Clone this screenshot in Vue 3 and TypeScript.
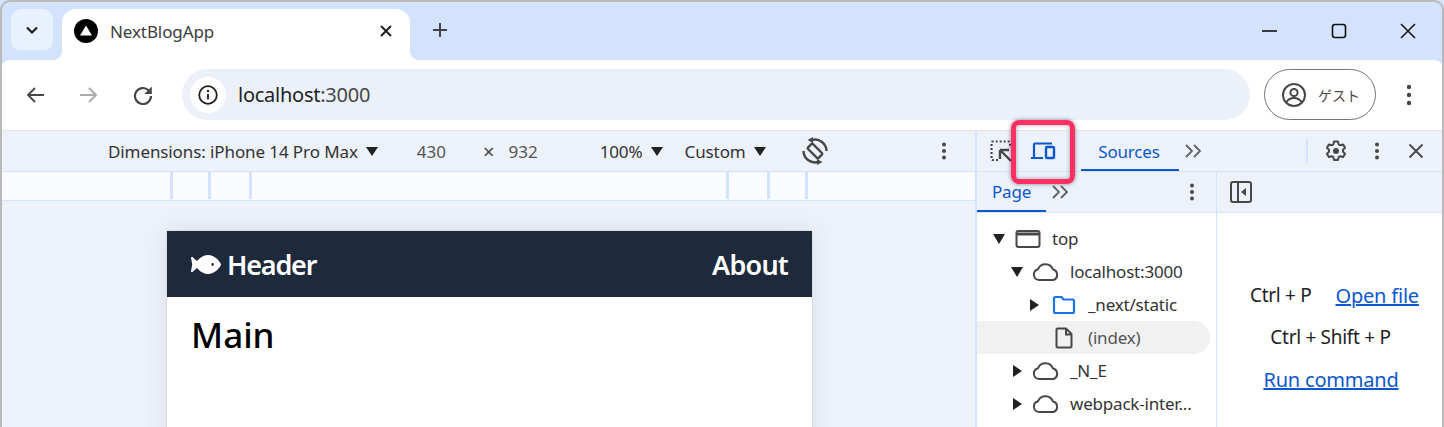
<script setup lang="ts">
interface TreeRow { label: string; depth: number; arrow: 'down' | 'right' | ''; icon: 'frame' | 'cloud' | 'folder' | 'file'; selected?: boolean }
const rows: TreeRow[] = [
  { label: 'top', depth: 0, arrow: 'down', icon: 'frame' },
  { label: 'localhost:3000', depth: 1, arrow: 'down', icon: 'cloud' },
  { label: '_next/static', depth: 2, arrow: 'right', icon: 'folder' },
  { label: '(index)', depth: 2, arrow: '', icon: 'file', selected: true },
  { label: '_N_E', depth: 1, arrow: 'right', icon: 'cloud' },
  { label: 'webpack-inter...', depth: 1, arrow: 'right', icon: 'cloud' },
]
</script>

<template>
  <div class="window">
    <div class="tabstrip">
      <button class="tabsearch">
        <svg width="14" height="14" viewBox="0 0 14 14"><path d="M2 4.500l5 5 5-5" fill="none" stroke="#1f1f1f" stroke-width="2.200"/></svg>
      </button>
      <div class="tab">
        <svg class="favicon" width="24" height="24" viewBox="0 0 24 24"><circle cx="12" cy="12" r="12" fill="#000"/><path d="M12 6.500L18 16.500H6z" fill="#fff"/></svg>
        <span class="tabtitle">NextBlogApp</span>
        <svg class="tabclose" width="14" height="14" viewBox="0 0 14 14"><path d="M2 2l10 10M12 2L2 12" stroke="#1f1f1f" stroke-width="2"/></svg>
      </div>
      <svg class="newtab" width="16" height="16" viewBox="0 0 16 16"><path d="M8 1v14M1 8h14" stroke="#444" stroke-width="2"/></svg>
      <div class="winctrl">
        <svg width="16" height="16" viewBox="0 0 16 16"><path d="M0 8h15" stroke="#111" stroke-width="1.600"/></svg>
        <svg width="16" height="16" viewBox="0 0 16 16"><rect x="1.500" y="1.500" width="13" height="13" rx="2.500" fill="none" stroke="#111" stroke-width="1.600"/></svg>
        <svg width="16" height="16" viewBox="0 0 16 16"><path d="M1 1l14 14M15 1L1 15" stroke="#111" stroke-width="1.500"/></svg>
      </div>
    </div>

    <div class="toolbar">
      <svg class="nav" width="20" height="20" viewBox="0 0 20 20"><path d="M19 10H3M10 3l-7 7 7 7" fill="none" stroke="#474747" stroke-width="1.900"/></svg>
      <svg class="nav" width="20" height="20" viewBox="0 0 20 20"><path d="M1 10h16M10 3l7 7-7 7" fill="none" stroke="#ababab" stroke-width="1.900"/></svg>
      <svg class="nav reload" width="20" height="20" viewBox="0 0 20 20"><path d="M18 11a8 8 0 1 1-2.400-5.700L17 7" fill="none" stroke="#474747" stroke-width="2.200"/><path d="M18.800 1.500v7.500h-7.500z" fill="#474747"/></svg>
      <div class="omnibox">
        <span class="infowrap">
          <svg width="20" height="20" viewBox="0 0 20 20"><circle cx="10" cy="10" r="8.800" fill="none" stroke="#1f1f1f" stroke-width="1.800"/><path d="M10 9v5.500" stroke="#1f1f1f" stroke-width="1.800"/><circle cx="10" cy="6" r="1.200" fill="#1f1f1f"/></svg>
        </span>
        <span class="url">localhost<span class="urlport">:3000</span></span>
      </div>
      <div class="guest">
        <svg width="26" height="26" viewBox="0 0 26 26"><circle cx="13" cy="13" r="11" fill="none" stroke="#474747" stroke-width="2"/><circle cx="13" cy="10.500" r="3.600" fill="none" stroke="#474747" stroke-width="2"/><path d="M5.500 20c2-3 5-4 7.500-4s5.500 1 7.500 4" fill="none" stroke="#474747" stroke-width="2"/></svg>
        <span class="guesttext">ゲスト</span>
      </div>
      <svg class="kebab" width="6" height="22" viewBox="0 0 6 22"><circle cx="3" cy="3" r="2.200" fill="#474747"/><circle cx="3" cy="11" r="2.200" fill="#474747"/><circle cx="3" cy="19" r="2.200" fill="#474747"/></svg>
    </div>

    <div class="body">
      <section class="device">
        <div class="devbar">
          <span class="dd dims">Dimensions: iPhone 14 Pro Max<i class="caret"></i></span>
          <span class="num w430">430</span>
          <span class="times">×</span>
          <span class="num w932">932</span>
          <span class="dd pct">100%<i class="caret"></i></span>
          <span class="dd custom">Custom<i class="caret"></i></span>
          <svg class="rotate" width="28" height="28" viewBox="0 0 28 28">
            <rect x="10.500" y="6.500" width="7" height="15" rx="1.200" transform="rotate(-45 14 14)" fill="none" stroke="#474747" stroke-width="2.400"/>
            <path d="M11 3A11.500 11.500 0 0 1 25.500 14" fill="none" stroke="#474747" stroke-width="2.400"/>
            <path d="M6.500 3L12 0v6zM21.500 25L16 22v6z" fill="#474747"/>
            <path d="M17 25A11.500 11.500 0 0 1 2.500 14" fill="none" stroke="#474747" stroke-width="2.400"/>
          </svg>
          <svg class="devkebab" width="6" height="18" viewBox="0 0 6 18"><circle cx="3" cy="2.500" r="2" fill="#474747"/><circle cx="3" cy="9" r="2" fill="#474747"/><circle cx="3" cy="15.500" r="2" fill="#474747"/></svg>
        </div>
        <div class="ruler">
          <i class="tick t1"></i><i class="tick t2"></i><i class="tick t3"></i>
          <i class="tick t4"></i><i class="tick t5"></i><i class="tick t6"></i>
        </div>
        <div class="stage">
          <div class="page">
            <header class="pagehead">
              <span class="brand">
                <svg width="30" height="19" viewBox="0 96 576 320" preserveAspectRatio="none"><path fill="#fff" d="M327.1 96c-89.97 0-168.54 54.77-212.27 101.63L27.5 131.58c-12.13-9.18-30.24.6-27.14 14.66L24.54 256 .35 365.77c-3.1 14.06 15.01 23.83 27.14 14.66l87.33-66.05C158.55 361.23 237.13 416 327.1 416 464.56 416 576 288 576 256S464.56 96 327.1 96zm87.43 184c-13.25 0-24-10.75-24-24 0-13.26 10.75-24 24-24 13.26 0 24 10.74 24 24 0 13.25-10.75 24-24 24z"/></svg>
                Header
              </span>
              <span class="about">About</span>
            </header>
            <h1 class="main">Main</h1>
          </div>
        </div>
      </section>

      <aside class="devtools">
        <div class="dtbar">
          <svg class="dticon" width="24" height="24" viewBox="0 0 24 24"><path d="M9 21H3.500a1 1 0 0 1-1-1V3.500a1 1 0 0 1 1-1H20a1 1 0 0 1 1 1V9" fill="none" stroke="#474747" stroke-width="2.200" stroke-dasharray="2 2"/><path d="M11 11l11 11M11 11h9M11 11v9" fill="none" stroke="#474747" stroke-width="2.400"/></svg>
          <svg class="dticon device-toggle" width="26" height="20" viewBox="0 0 26 20"><path d="M4 16V3.500a1 1 0 0 1 1-1h17M1 17h12" fill="none" stroke="#0b57d0" stroke-width="2.200"/><rect x="16" y="6" width="8" height="11" rx="1" fill="none" stroke="#0b57d0" stroke-width="2.400"/></svg>
          <span class="tabx sources">Sources</span>
          <svg class="chev" width="18" height="14" viewBox="0 0 18 14"><path d="M2 1l6 6-6 6M10 1l6 6-6 6" fill="none" stroke="#5f6368" stroke-width="1.800"/></svg>
          <i class="dtsep"></i>
          <svg class="gear" width="24" height="24" viewBox="0 0 24 24"><path fill="none" stroke="#474747" stroke-width="2" stroke-linejoin="round" d="M10 2.500h4l.6 2.800 1.800 1 2.700-.9 2 3.400-2.100 1.900v2.100l2.100 1.900-2 3.400-2.700-.9-1.800 1-.6 2.800h-4l-.6-2.800-1.800-1-2.700.9-2-3.400 2.100-1.900v-2.100L2.900 8.800l2-3.400 2.700.9 1.800-1z"/><circle cx="12" cy="12" r="3" fill="#474747"/></svg>
          <svg class="dtkebab" width="6" height="18" viewBox="0 0 6 18"><circle cx="3" cy="2.500" r="2" fill="#474747"/><circle cx="3" cy="9" r="2" fill="#474747"/><circle cx="3" cy="15.500" r="2" fill="#474747"/></svg>
          <svg class="dtclose" width="16" height="16" viewBox="0 0 16 16"><path d="M1.500 1.500l13 13M14.500 1.500l-13 13" stroke="#474747" stroke-width="1.800"/></svg>
        </div>
        <div class="split">
          <div class="nav-pane">
            <div class="subbar">
              <span class="tabx page-tab">Page</span>
              <svg class="chev2" width="18" height="14" viewBox="0 0 18 14"><path d="M2 1l6 6-6 6M10 1l6 6-6 6" fill="none" stroke="#5f6368" stroke-width="1.800"/></svg>
              <svg class="subkebab" width="6" height="18" viewBox="0 0 6 18"><circle cx="3" cy="2.500" r="2" fill="#474747"/><circle cx="3" cy="9" r="2" fill="#474747"/><circle cx="3" cy="15.500" r="2" fill="#474747"/></svg>
            </div>
            <ul class="tree">
              <li v-for="r in rows" :key="r.label" class="row" :class="[`d${r.depth}`, { sel: r.selected }]">
                <i class="arrow" :class="r.arrow"></i>
                <svg v-if="r.icon === 'frame'" class="ic" width="26" height="20" viewBox="0 0 26 20"><rect x="1.500" y="2" width="23" height="16" rx="2" fill="none" stroke="#474747" stroke-width="2"/><path d="M2 5h22" stroke="#474747" stroke-width="3"/></svg>
                <svg v-else-if="r.icon === 'cloud'" class="ic" width="28" height="20" viewBox="0 0 28 20"><path d="M7 18a5.500 5.500 0 0 1-1-10.800A8 8 0 0 1 21 7.500 5.500 5.500 0 0 1 21.500 18z" fill="none" stroke="#474747" stroke-width="2" stroke-linejoin="round"/></svg>
                <svg v-else-if="r.icon === 'folder'" class="ic" width="24" height="20" viewBox="0 0 24 20"><path d="M2 3.500a1.500 1.500 0 0 1 1.500-1.500h6l2 2.500h9a1.500 1.500 0 0 1 1.500 1.500v10.500a1.500 1.500 0 0 1-1.500 1.500h-17a1.500 1.500 0 0 1-1.500-1.500z" fill="none" stroke="#1a73e8" stroke-width="2.200"/></svg>
                <svg v-else class="ic" width="18" height="22" viewBox="0 0 18 22"><path d="M2.500 1.500h8.500l5.500 5.500V19a1.500 1.500 0 0 1-1.500 1.500H3A1.500 1.500 0 0 1 1.500 19V2.500a1 1 0 0 1 1-1zM11 1.500V7.500h5.500" fill="none" stroke="#474747" stroke-width="2"/></svg>
                <span class="lbl">{{ r.label }}</span>
              </li>
            </ul>
          </div>
          <div class="editor">
            <div class="subbar">
              <svg class="panelicon" width="22" height="22" viewBox="0 0 22 22"><rect x="1" y="1" width="20" height="20" rx="2" fill="none" stroke="#474747" stroke-width="2"/><path d="M8 1v20" stroke="#474747" stroke-width="2"/><path d="M16 7v8l-5-4z" fill="#474747"/></svg>
            </div>
            <div class="hints">
              <div class="hint h1"><span class="kbd">Ctrl + P</span><a class="lnk">Open file</a></div>
              <div class="hint h2"><span class="kbd">Ctrl + Shift + P</span></div>
              <div class="hint h3"><a class="lnk">Run command</a></div>
            </div>
          </div>
        </div>
        <div class="highlight"></div>
      </aside>
    </div>
    <div class="frame"></div>
  </div>
</template>

<style>
html, body { margin: 0; padding: 0; overflow: hidden; background: #fff; }
</style>

<style scoped>
.window { position: relative; width: 1444px; height: 427px; overflow: hidden; display: flex; flex-direction: column; font-family: "Noto Sans", "Noto Sans CJK JP", sans-serif; background: #fff; }
.frame { position: absolute; inset: 0 0 -10px 0; border: 2px solid #b9b9b9; border-bottom: 0; border-radius: 10px 10px 0 0; pointer-events: none; }
svg { display: block; flex: none; }

.tabstrip { height: 60px; flex: none; background: #d3e3fd; display: flex; align-items: flex-start; padding-left: 11px; box-sizing: border-box; }
.tabsearch { width: 42px; height: 42px; margin-top: 9px; border: 0; padding: 0; border-radius: 11px; background: #e9f0fe; display: flex; align-items: center; justify-content: center; }
.tab { position: relative; width: 348px; height: 51px; margin: 9px 0 0 9px; background: #fff; border-radius: 14px 14px 0 0; display: flex; align-items: center; padding: 0 0 8px 12px; box-sizing: border-box; }
.tab::before, .tab::after { content: ""; position: absolute; bottom: 0; width: 10px; height: 10px; }
.tab::before { left: -10px; background: radial-gradient(circle at 0 0, transparent 10px, #fff 10.5px); }
.tab::after { right: -10px; background: radial-gradient(circle at 100% 0, transparent 10px, #fff 10.5px); }
.tabtitle { margin: 2px 0 0 12px; font-size: 17px; color: #3c3c3c; letter-spacing: -0.1px; }
.tabclose { margin-left: auto; margin-right: 17px; }
.newtab { margin: 22px 0 0 22px; }
.winctrl { margin-left: auto; display: flex; gap: 53px; margin-top: 23px; margin-right: 28px; }

.toolbar { height: 71px; flex: none; background: #fff; border-radius: 10px 10px 0 0; display: flex; align-items: center; padding: 0 0 1px 25px; box-sizing: border-box; border-bottom: 1px solid #e3e3e3; box-shadow: 0 -10px 0 0 #d3e3fd; }
.nav { margin-right: 34px; }
.nav.reload { margin-right: 29px; }
.omnibox { width: 1068px; height: 51px; background: #ecf1f9; border-radius: 26px; display: flex; align-items: center; padding-left: 8px; box-sizing: border-box; }
.infowrap { width: 36px; height: 36px; border-radius: 50%; background: #fff; display: flex; align-items: center; justify-content: center; }
.url { margin-left: 12px; font-size: 20px; color: #1f1f1f; letter-spacing: -0.25px; }
.urlport { color: #474747; }
.guest { width: 112px; height: 51px; margin-left: 14px; border: 1px solid #747775; border-radius: 26px; box-sizing: border-box; display: flex; align-items: center; padding-left: 16px; }
.guesttext { margin-left: 11px; font-size: 14px; color: #474747; }
.kebab { margin-left: 30px; }

.body { flex: 1; display: flex; min-height: 0; }
.device { width: 975px; flex: none; display: flex; flex-direction: column; background: #edf1fa; }
.devbar { height: 40px; flex: none; display: flex; align-items: center; padding-left: 108px; box-sizing: border-box; font-size: 17px; color: #333; }
.dd { display: inline-flex; align-items: center; white-space: nowrap; letter-spacing: -0.1px; }
.caret { display: inline-block; width: 0; height: 0; margin-left: 8px; border-left: 6px solid transparent; border-right: 6px solid transparent; border-top: 9px solid #222; }
.num { color: #555; }
.w430 { margin-left: 39px; }
.times { margin-left: 37px; font-size: 20px; color: #444; }
.w932 { margin-left: 14px; }
.pct { margin-left: 62px; }
.custom { margin-left: 22px; }
.rotate { margin-left: 35px; }
.devkebab { margin-left: 112px; }
.ruler { position: relative; height: 30px; flex: none; box-sizing: border-box; background: #f9fbff; border-top: 1px solid #d3e3fd; border-bottom: 1px solid #d3e3fd; display: flex; }
.tick { width: 3px; height: 27px; background: #d3e3fd; flex: none; }
.t1 { margin-left: 170px; }
.t2 { margin-left: 35px; }
.t3 { margin-left: 38px; }
.t4 { margin-left: 474px; }
.t5 { margin-left: 38px; }
.t6 { margin-left: 35px; }
.stage { flex: 1; padding: 30px 0 0 167px; min-height: 0; overflow: hidden; }
.page { width: 645px; height: 300px; background: #fff; box-shadow: 0 0 20px rgba(60, 70, 90, 0.12), 0 0 1px rgba(0,0,0,.25); }
.pagehead { height: 66px; background: #1e293b; color: #fff; display: flex; align-items: center; justify-content: space-between; padding: 0 24px; font-size: 27px; font-weight: 600; }
.brand { display: flex; align-items: center; gap: 6px; letter-spacing: -1.2px; }
.about { letter-spacing: -0.8px; }
.main { margin: 16px 0 0 24px; font-size: 35px; line-height: 44px; font-weight: 500; color: #000; }

.devtools { position: relative; flex: 1; min-width: 0; border-left: 2px solid #d3e3fd; display: flex; flex-direction: column; background: #fff; }
.dtbar { height: 41px; flex: none; background: #edf2fa; border-bottom: 1px solid #d3e3fd; box-sizing: border-box; display: flex; align-items: center; padding-left: 12px; }
.device-toggle { margin-left: 17px; }
.tabx { font-size: 17px; color: #0b57d0; letter-spacing: -0.2px; }
.sources { height: 40px; line-height: 41px; width: 98px; text-align: center; box-sizing: border-box; margin-left: 25px; padding-right: 2px; border-bottom: 2px solid #0b57d0; }
.chev { margin-left: 5px; }
.dtsep { width: 2px; height: 24px; background: #d3e3fd; margin-left: 104px; }
.gear { margin-left: 16px; }
.dtkebab { margin-left: 26px; }
.dtclose { margin-left: 28px; }
.split { flex: 1; display: flex; min-height: 0; }
.nav-pane { width: 240px; flex: none; border-right: 1px solid #d3e3fd; box-sizing: border-box; }
.subbar { height: 41px; background: #edf2fa; border-bottom: 1px solid #d3e3fd; box-sizing: border-box; display: flex; align-items: center; }
.page-tab { width: 69px; height: 40px; line-height: 40px; text-align: center; box-sizing: border-box; border-bottom: 2px solid #0b57d0; }
.chev2 { margin-left: 5px; }
.subkebab { margin-left: 120px; }
.tree { list-style: none; margin: 9px 0 0; padding: 0 6px 0 0; }
.row { height: 33px; display: flex; align-items: center; font-size: 17px; color: #333; letter-spacing: -0.2px; white-space: nowrap; border-radius: 0 17px 17px 0; }
.row.sel { background: #f1f1f1; color: #555; }
.arrow { width: 12px; height: 10px; flex: none; }
.arrow.down { border-left: 6px solid transparent; border-right: 6px solid transparent; border-top: 10px solid #222; width: 0; height: 0; }
.arrow.right { border-top: 6px solid transparent; border-bottom: 6px solid transparent; border-left: 9px solid #222; width: 0; height: 0; margin-right: 3px; }
.row.d0 { padding-left: 16px; }
.row.d1 { padding-left: 34px; }
.row.d2 { padding-left: 53px; }
.d1 .arrow.right { margin-left: 2px; margin-right: 1px; }
.ic { margin-left: 10px; }
.d1 .ic { margin-left: 9px; }
.lbl { margin-left: 11px; }
.d1 .lbl { margin-left: 10px; }
.d2 .lbl { margin-left: 12px; }
.d2.sel .ic { margin-left: 13px; }
.d2.sel .lbl { margin-left: 15px; }
.editor { flex: 1; min-width: 0; }
.panelicon { margin-left: 13px; }
.hints { font-size: 19px; color: #222; letter-spacing: -0.3px; }
.hint { display: flex; align-items: center; justify-content: center; height: 42px; white-space: nowrap; }
.h1 { gap: 24px; margin: 61px 0 0 8px; }
.h3 { margin-left: 1px; }
.lnk { color: #0b57d0; text-decoration: underline; text-decoration-thickness: 1.5px; font-size: 20px; letter-spacing: -0.2px; }
.highlight { position: absolute; left: 34px; top: -11px; width: 64px; height: 64px; box-sizing: border-box; border: 5px solid #ff2e63; border-radius: 8px; box-shadow: 0 0 4px rgba(0,0,0,.45), inset 0 0 4px rgba(0,0,0,.35); }
</style>
